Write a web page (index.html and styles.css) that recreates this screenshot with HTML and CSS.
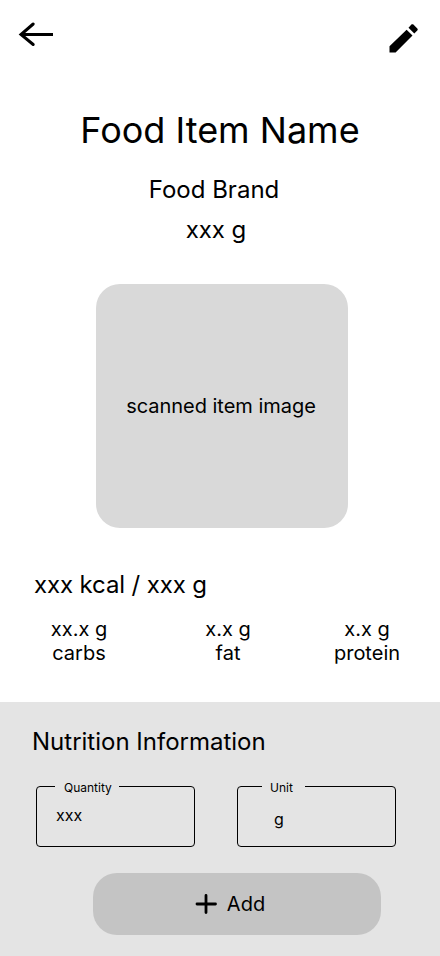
FILE: index.html
```html
<!DOCTYPE html>
<html lang="en">
<head>
<meta charset="utf-8">
<title>Food Item</title>
<link rel="stylesheet" href="styles.css">
</head>
<body>
<main class="screen">
  <header class="topbar">
    <svg class="back" width="36" height="28" viewBox="0 0 36 28" fill="none" stroke="#000" stroke-width="3"><path d="M35 13.5H3"/><path d="M15.2 3L3 13.5L15.2 23.5" stroke-linecap="round"/></svg>
    <svg class="edit" width="30" height="30" viewBox="0 0 30 30"><path d="M1.5 23.3V29.5H7.6L24.5 12.5L18.6 6.7ZM29.3 7.5C29.9 6.9 29.9 6.1 29.3 5.5L25.4 1.6C24.8 1 24 1 23.4 1.6L20.5 4.7L26.3 10.5Z"/></svg>
  </header>
  <h1 class="name">Food Item Name</h1>
  <p class="brand">Food Brand</p>
  <p class="weight">xxx g</p>
  <div class="photo"><span>scanned item image</span></div>
  <p class="energy">xxx kcal / xxx g</p>
  <div class="macros">
    <div class="macro">xx.x g<br>carbs</div>
    <div class="macro">x.x g<br>fat</div>
    <div class="macro">x.x g<br>protein</div>
  </div>
  <section class="nutrition">
    <h2 class="heading">Nutrition Information</h2>
    <div class="fields">
      <fieldset class="field quantity"><legend>Quantity</legend><span>xxx</span></fieldset>
      <fieldset class="field unit"><legend>Unit</legend><span>g</span></fieldset>
    </div>
    <button class="add"><svg width="22" height="22" viewBox="0 0 22 22" stroke="#000" stroke-width="2.8" stroke-linecap="round"><path d="M11 2.4V19.6M2 11H20.5"/></svg>Add</button>
  </section>
</main>
</body>
</html>
```
FILE: styles.css
```css
* { box-sizing: border-box; }
body, h1, h2, p { margin: 0; font-weight: 400; }
body { font-family: Inter, sans-serif; color: #000; background: #fff; }
.screen { width: 440px; height: 956px; display: flex; flex-direction: column; overflow: hidden; }
.topbar { display: flex; justify-content: space-between; height: 108px; padding: 21px 22px 0 18px; }
.edit { margin-top: 2px; }
.name { font-size: 36px; line-height: 44px; text-align: center; }
.brand { margin: 23px 12px 0 0; font-size: 24px; line-height: 29px; text-align: center; }
.weight { margin: 11px 8px 0 0; font-size: 24px; line-height: 29px; letter-spacing: -0.1px; text-align: center; }
.photo { width: 252px; height: 244px; margin: 40px 0 0 96px; padding-right: 2px; border-radius: 24px; background: #d9d9d9; display: flex; align-items: center; justify-content: center; font-size: 20px; line-height: 24px; letter-spacing: -0.03px; }
.energy { margin: 42px 0 0 34px; font-size: 24px; line-height: 29px; letter-spacing: -0.12px; }
.macros { display: grid; grid-template-columns: 90px 90px 90px; gap: 59px; margin: 18px 0 0 34px; font-size: 20px; line-height: 24px; text-align: center; }
.macro:last-child { margin-left: -10px; margin-right: 10px; }
.nutrition { flex: 1; margin-top: 37px; padding-top: 25px; background: #e4e4e4; }
.heading { margin-left: 32px; font-size: 24px; line-height: 29px; }
.fields { display: flex; gap: 42px; margin: 24px 0 0 36px; }
.field { width: 159px; height: 67px; margin: 0; padding: 0; border: 1px solid #000; border-radius: 4px; font-size: 16px; line-height: 20px; }
.field legend { height: 13px; padding: 0 7px 0 9px; font-size: 12px; line-height: 15px; }
.quantity legend { margin-left: 18px; }
.quantity span { display: block; margin: 12px 0 0 19px; }
.unit legend { margin-left: 24px; padding: 0 12px 0 8px; }
.unit span { display: block; margin: 16px 0 0 36px; }
.add { display: flex; align-items: center; justify-content: center; gap: 10px; width: 288px; height: 62px; margin: 26px 0 0 93px; padding: 0 14px 0 0; border: 0; border-radius: 24px; background: #c4c4c4; font: 20px/24px Inter, sans-serif; color: #000; }
```
